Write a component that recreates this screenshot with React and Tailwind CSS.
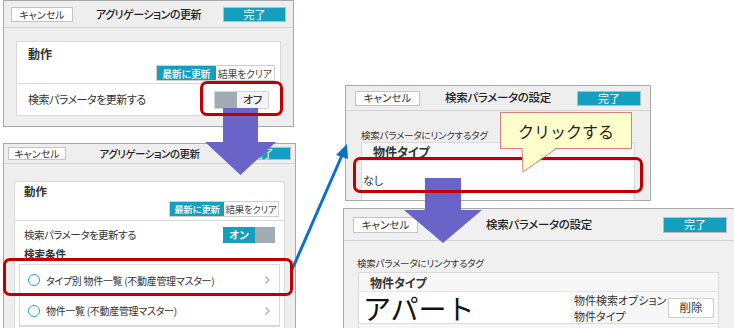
const jp = "font-['Noto_Sans_CJK_JP','Noto_Sans',sans-serif] [font-feature-settings:'palt']"

function Header({ title, cancelCls, doneCls, titleCls, className }) {
  return (
    <div className={`relative flex items-center justify-between border-b border-[#d4d4d4] ${className}`}>
      <div className={`flex items-center justify-center border border-[#c4c4c4] bg-white text-[#333] ${cancelCls}`}>
        キャンセル
      </div>
      <div className={`absolute inset-x-0 whitespace-nowrap text-center font-medium text-[#222] ${titleCls}`}>{title}</div>
      <div className={`relative flex items-center justify-center border border-[#bcbcbc] bg-[#159fbf] text-white ${doneCls}`}>
        完了
      </div>
    </div>
  )
}

function Segmented({ className, textCls }) {
  return (
    <div className={`flex whitespace-nowrap border border-[#cfcfcf] tracking-[-0.3px] ${textCls} ${className}`}>
      <div className="flex flex-1 items-center justify-center bg-[#159fbf] font-medium text-white">最新に更新</div>
      <div className="flex flex-1 items-center justify-center bg-white text-[#444]">結果をクリア</div>
    </div>
  )
}

function Radio() {
  return <span className="h-[12px] w-[12px] shrink-0 rounded-full border-[1.5px] border-[#27a3c8] bg-white" />
}

function Chevron() {
  return (
    <svg width="7" height="10" viewBox="0 0 7 10" className="shrink-0">
      <path d="M1.5 1.5 L5 5 L1.5 8.5" fill="none" stroke="#b8b8b8" strokeWidth="1.5" />
    </svg>
  )
}

function DownArrow({ className, shaft, head }) {
  return (
    <div className={`absolute flex flex-col items-center ${className}`}>
      <div className={`bg-[#6a64c9] ${shaft}`} />
      <svg className={head} viewBox="0 0 100 50" preserveAspectRatio="none">
        <polygon points="0,0 100,0 50,50" fill="#6a64c9" />
      </svg>
    </div>
  )
}

export default function App() {
  return (
    <div className={`relative h-[328px] w-[734px] overflow-hidden bg-white ${jp}`}>
      {/* panel 1 */}
      <div className="absolute left-[3px] top-0 flex h-[127px] w-[291px] flex-col border border-[#a8a8a8] bg-[#eeeeee]">
        <Header
          title="アグリゲーションの更新"
          className="h-[27px] px-[7px]"
          cancelCls="h-[15px] w-[62px] text-[10px]"
          doneCls="h-[15px] w-[63px] text-[11px]"
          titleCls="text-[11px] tracking-[-0.5px]"
        />
        <div className="mx-[12px] mt-[13px] flex flex-col border border-[#dadada] bg-white">
          <div className="flex h-[42px] flex-col border-b border-[#dadada] px-[11px]">
            <div className="mt-[3px] text-[12px] font-bold text-[#333]">動作</div>
            <Segmented className="ml-auto mr-[-6px] mt-[2px] h-[16px] w-[119px]" textCls="text-[10px]" />
          </div>
          <div className="flex h-[31px] items-center justify-between px-[11px]">
            <span className="text-[11px] tracking-[-0.5px] text-[#333]">検索パラメータを更新する</span>
            <div className="flex h-[18px] w-[55px] border border-[#d6d6d6] text-[11px]">
              <div className="w-[22px] bg-[#a2abb4]" />
              <div className="flex flex-1 items-center justify-center bg-[#f4f4f4] font-medium text-[#333]">オフ</div>
            </div>
          </div>
        </div>
      </div>

      {/* panel 2 */}
      <div className="absolute left-[3px] top-[143px] flex h-[186px] w-[293px] flex-col border border-[#a8a8a8] bg-[#eeeeee]">
        <Header
          title="アグリゲーションの更新"
          className="h-[20px] px-[4px]"
          cancelCls="h-[13px] w-[58px] text-[10px]"
          doneCls="h-[13px] w-[57px] text-[11px]"
          titleCls="text-[10.5px] tracking-[-0.5px]"
        />
        <div className="mx-[10px] mt-[17px] flex flex-1 flex-col border border-b-0 border-[#dadada] bg-white">
          <div className="flex h-[39px] flex-col border-b border-[#dadada] px-[9px]">
            <div className="mt-[1px] text-[11.5px] font-bold text-[#333]">動作</div>
            <Segmented className="ml-auto mr-[-4px] mt-[1px] h-[16px] w-[110px]" textCls="text-[9.5px]" />
          </div>
          <div className="flex h-[22px] items-center justify-between px-[9px] pt-[6px]">
            <span className="text-[10.5px] tracking-[-0.5px] text-[#333]">検索パラメータを更新する</span>
            <div className="flex h-[16px] w-[52px] text-[10.5px]">
              <div className="flex w-[32px] items-center justify-center bg-[#159fbf] font-bold text-white">オン</div>
              <div className="flex-1 bg-[#a2abb4]" />
            </div>
          </div>
          <div className="mt-[4px] px-[9px] text-[10.5px] font-bold leading-[14px] text-[#333]">検索条件</div>
          <div className="mx-[4px] mt-[3px] flex flex-col border border-[#dadada]">
            <div className="flex h-[31px] items-center gap-[6px] border-b border-[#dadada] px-[8px]">
              <Radio />
              <span className="flex-1 whitespace-nowrap text-[10px] tracking-[-0.3px] text-[#333]">タイプ別 物件一覧 (不動産管理マスター)</span>
              <Chevron />
            </div>
            <div className="flex h-[30px] items-center gap-[6px] border-b border-[#dadada] px-[8px]">
              <Radio />
              <span className="flex-1 whitespace-nowrap text-[10px] tracking-[-0.3px] text-[#333]">物件一覧 (不動産管理マスター)</span>
              <Chevron />
            </div>
          </div>
        </div>
      </div>

      {/* panel 3 */}
      <div className="absolute left-[345px] top-[85px] flex h-[116px] w-[306px] flex-col border border-[#a8a8a8] bg-[#eeeeee]">
        <Header
          title="検索パラメータの設定"
          className="h-[25px] px-[9px]"
          cancelCls="h-[15px] w-[65px] text-[10.5px]"
          doneCls="h-[15px] w-[64px] text-[11px]"
          titleCls="text-[11.5px] tracking-[-0.3px]"
        />
        <div className="mx-[15px] mt-[17px] whitespace-nowrap text-[9.5px] leading-[14px] tracking-[-0.2px] text-[#333]">検索パラメータにリンクするタグ</div>
        <div className="mx-[15px] flex flex-1 flex-col border border-b-0 border-[#dadada] bg-white">
          <div className="h-[18px] border-b border-[#e6e6e6] bg-[#f7f7f7] px-[11px] text-[12px] font-bold leading-[18px] text-[#333]">物件タイプ</div>
          <div className="flex flex-1 items-center px-[1px] text-[11px] text-[#333]">なし</div>
        </div>
      </div>

      {/* panel 4 */}
      <div className="absolute left-[343px] top-[208px] flex h-[121px] w-[392px] flex-col border border-[#a8a8a8] bg-[#f0f0f0]">
        <Header
          title="検索パラメータの設定"
          className="h-[32px] px-[9px]"
          cancelCls="h-[16px] w-[65px] text-[10.5px]"
          doneCls="h-[16px] w-[64px] text-[11px] mr-[-2px]"
          titleCls="text-[11.5px] tracking-[-0.3px]"
        />
        <div className="mx-[13px] mt-[15px] whitespace-nowrap text-[9.5px] leading-[14px] tracking-[-0.2px] text-[#333]">検索パラメータにリンクするタグ</div>
        <div className="ml-[14px] mr-[15px] mt-[2px] flex flex-1 flex-col border border-b-0 border-[#dadada] bg-[#f7f7f7]">
          <div className="h-[19px] border-b border-[#e6e6e6] px-[11px] text-[12px] font-bold leading-[19px] text-[#333]">物件タイプ</div>
          <div className="flex h-[32px] items-center border-b border-[#dadada]">
            <div className="flex h-full w-[212px] items-center bg-white pl-[4px] text-[28px] leading-none text-[#111] [font-feature-settings:normal]">アパート</div>
            <div className="ml-[3px] flex flex-col whitespace-nowrap text-[11px] leading-[16px] text-[#333]">
              <span>物件検索オプション</span>
              <span>物件タイプ</span>
            </div>
            <div className="ml-auto mr-[4px] flex h-[20px] w-[46px] items-center justify-center border border-[#d0d0d0] bg-white text-[11.5px] text-[#333]">削除</div>
          </div>
        </div>
      </div>

      {/* purple arrows */}
      <DownArrow className="left-[205px] top-[108px] w-[71px]" shaft="h-[34px] w-[35px]" head="h-[33px] w-[71px]" />
      <DownArrow className="left-[404px] top-[178px] w-[78px]" shaft="h-[32px] w-[36px]" head="h-[33px] w-[78px]" />

      {/* blue arrow */}
      <svg className="absolute left-[285px] top-[138px]" width="70" height="140" viewBox="0 0 70 140">
        <line x1="6" y1="134" x2="58" y2="15" stroke="#0a72c4" strokeWidth="3" />
        <polygon points="62,6 51,17 63,21" fill="#0a72c4" />
      </svg>

      {/* red highlight frames */}
      <div className="absolute left-[200px] top-[81px] h-[35px] w-[83px] rounded-[7px] border-[3px] border-[#c00000]" />
      <div className="absolute left-[3px] top-[258px] h-[38px] w-[290px] rounded-[7px] border-[3px] border-[#c00000]" />
      <div className="absolute left-[353px] top-[157px] h-[36px] w-[290px] rounded-[7px] border-[3px] border-[#c00000]" />

      {/* callout */}
      <div className="absolute left-[500px] top-[112px] flex h-[37px] w-[132px] items-center justify-center border border-[#e27d7d] bg-[#ffffcc] text-[16px] text-[#222] [font-feature-settings:normal]">
        クリックする
      </div>
      <svg className="absolute left-[520px] top-[147px]" width="40" height="27" viewBox="0 0 40 27">
        <polygon points="2,0 37,0 3,25" fill="#ffffcc" />
        <polyline points="2,1 3,25 37,1" fill="none" stroke="#e27d7d" strokeWidth="1" />
      </svg>
    </div>
  )
}
